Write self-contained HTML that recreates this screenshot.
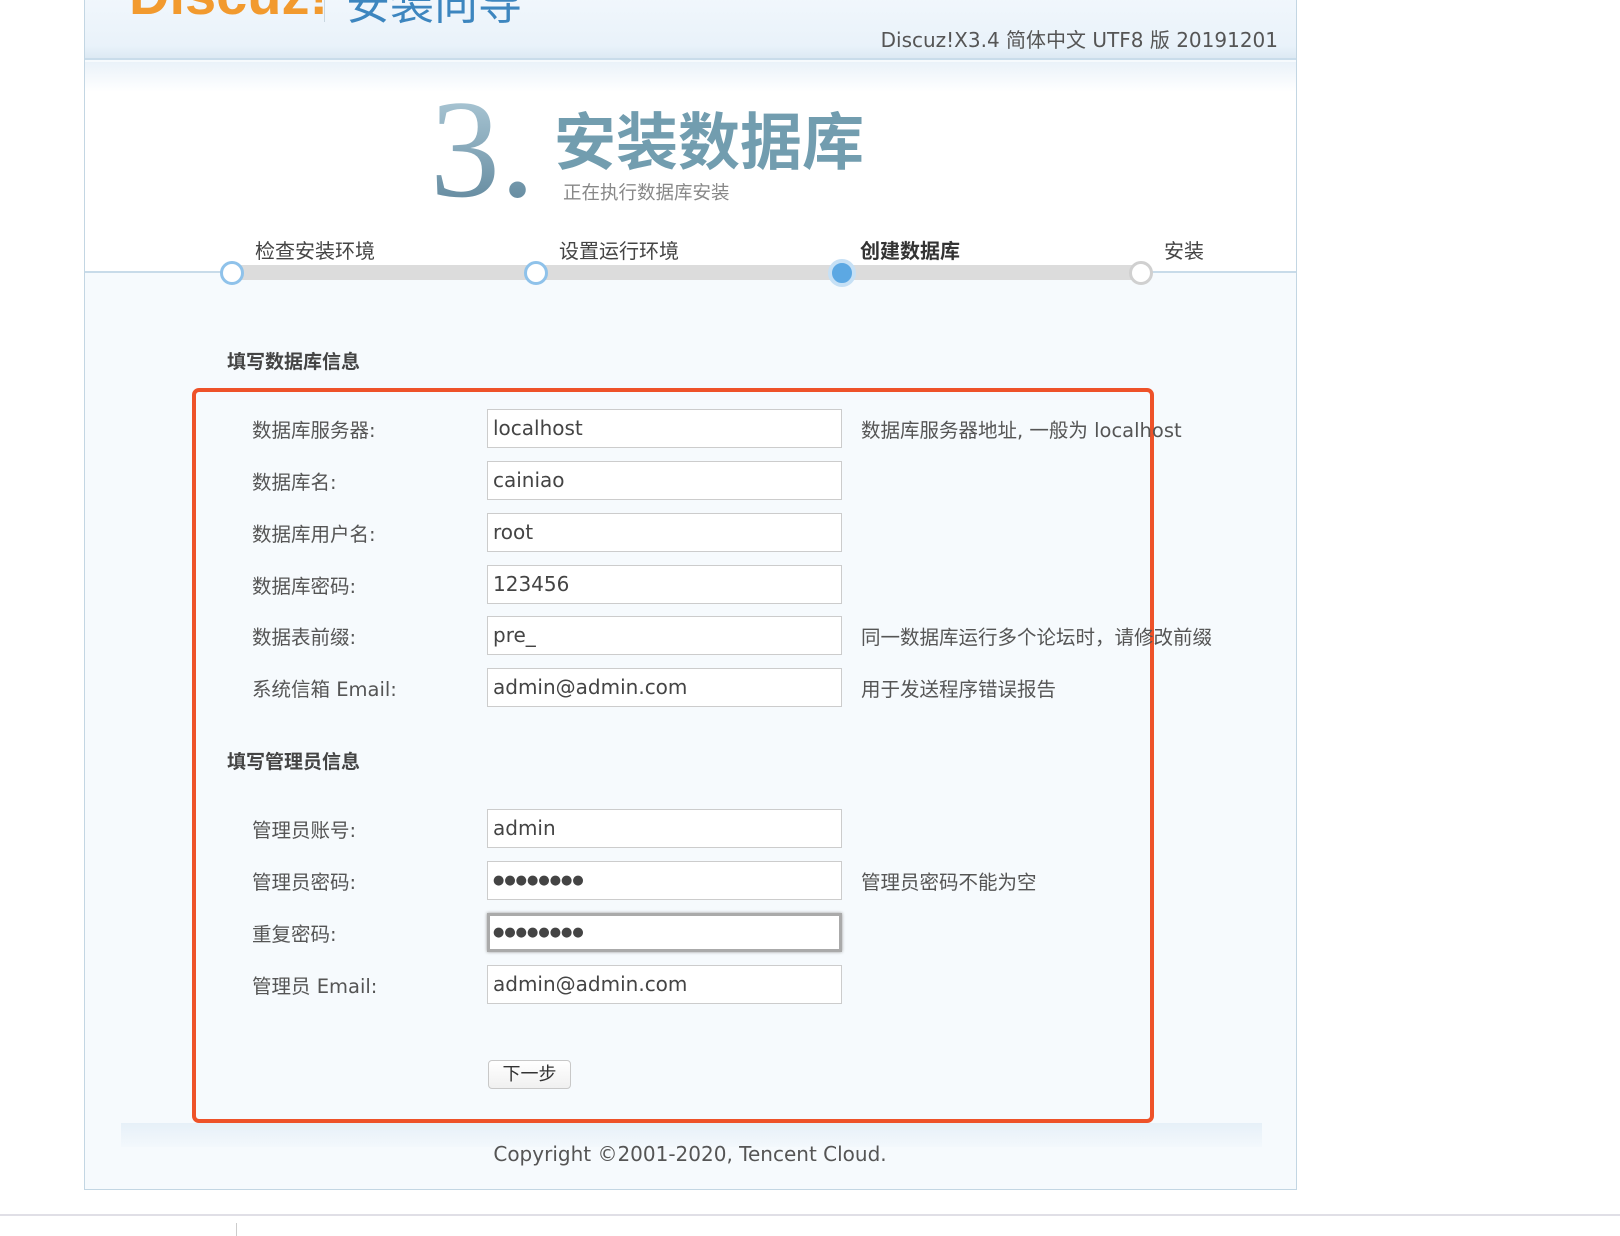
<!DOCTYPE html>
<html><head><meta charset="utf-8"><style>
*{margin:0;padding:0;box-sizing:border-box}
body{width:1620px;height:1236px;background:#fff;font-family:"DejaVu Sans","Noto Sans CJK SC",sans-serif;position:relative;overflow:hidden;color:#555}
.abs{position:absolute;white-space:nowrap}
#frame{position:absolute;left:84px;top:-2px;width:1213px;height:1192px;border:1px solid #c3d6e3;border-top:none;background:#f6fafd;overflow:hidden}
#hdr{position:absolute;left:0;top:0;width:100%;height:62px;background:linear-gradient(#f1f7fc,#e9f2fa 80%,#dde9f3);border-bottom:2px solid #c9dcea}
#white{position:absolute;left:0;top:64px;width:100%;height:210px;background:linear-gradient(#eaf2f9,#fff 30px)}
.lab{position:absolute;left:252px;font-size:19.5px;color:#555}
.inp{position:absolute;left:487px;width:355px;height:39px;background:#fff;border:1px solid #ccc;font-size:20px;color:#444;padding-left:5px;line-height:37px}
.hint{position:absolute;left:861px;font-size:19.5px;color:#555}
.circ{position:absolute;width:24px;height:24px;border-radius:50%;background:#fff;border:3px solid #8fc2ea;top:261px}
.step{position:absolute;top:235px;font-size:20px;color:#444}
.pw{letter-spacing:0px;font-size:13px}
</style></head><body>
<div id="frame">
 <div id="hdr"></div>
 <div id="white"></div>
 <div style="position:absolute;left:0;top:273px;width:100%;height:2px;background:#c8dbe9"></div>
 <div style="position:absolute;left:36px;top:1125px;width:1141px;height:24px;background:linear-gradient(#e6f0f8,#f3f8fc)"></div>
</div>
<div class="abs" style="left:129px;top:-38px;font-family:'Liberation Sans',sans-serif;font-size:56px;font-weight:bold;color:#f29a2e">Discuz!</div>
<div class="abs" style="left:324px;top:0;width:1px;height:22px;background:#c8d6e0"></div>
<div class="abs" style="left:346px;top:-32px;font-size:44px;color:#3d86bf;font-family:'Noto Sans CJK SC',sans-serif">安装向导</div>
<div class="abs" style="right:342px;top:24px;font-size:20px;color:#555">Discuz!X3.4 简体中文 UTF8 版 20191201</div>

<div class="abs" style="left:430px;top:80px;font-family:'Liberation Serif',serif;font-size:140px;line-height:140px;background:linear-gradient(#b4cfdc,#5a8298);-webkit-background-clip:text;color:transparent">3.</div>
<div class="abs" style="left:554px;top:100px;font-size:62px;font-weight:bold;color:#729daf;line-height:74px;font-family:'Noto Sans CJK SC',sans-serif">安装数据库</div>
<div class="abs" style="left:563px;top:179px;font-size:18.5px;color:#888">正在执行数据库安装</div>

<div class="abs" style="left:232px;top:265px;width:909px;height:15px;background:#dcdcdc"></div>
<div class="circ" style="left:220px"></div>
<div class="circ" style="left:524px"></div>
<div class="circ" style="left:828px;width:28px;height:28px;top:259px;border:4px solid #c6e0f5;background:#5ca8e3"></div>
<div class="circ" style="left:1129px;border-color:#d0d0d0"></div>
<div class="step" style="left:255px">检查安装环境</div>
<div class="step" style="left:559px">设置运行环境</div>
<div class="step" style="left:860px;font-weight:bold;color:#333">创建数据库</div>
<div class="step" style="left:1164px">安装</div>

<div class="abs" style="left:227px;top:347px;font-size:19px;font-weight:bold;color:#444">填写数据库信息</div>
<div class="abs" style="left:192px;top:388px;width:962px;height:735px;border:4px solid #ee5229;border-radius:7px"></div>

<div class="lab" style="top:414px">数据库服务器:</div><div class="inp" style="top:409px">localhost</div><div class="hint" style="top:414px">数据库服务器地址, 一般为 localhost</div>
<div class="lab" style="top:466px">数据库名:</div><div class="inp" style="top:461px">cainiao</div>
<div class="lab" style="top:518px">数据库用户名:</div><div class="inp" style="top:513px">root</div>
<div class="lab" style="top:570px">数据库密码:</div><div class="inp" style="top:565px">123456</div>
<div class="lab" style="top:621px">数据表前缀:</div><div class="inp" style="top:616px">pre_</div><div class="hint" style="top:621px">同一数据库运行多个论坛时，请修改前缀</div>
<div class="lab" style="top:673px">系统信箱 Email:</div><div class="inp" style="top:668px">admin@admin.com</div><div class="hint" style="top:673px">用于发送程序错误报告</div>

<div class="abs" style="left:227px;top:747px;font-size:19px;font-weight:bold;color:#444">填写管理员信息</div>
<div class="lab" style="top:814px">管理员账号:</div><div class="inp" style="top:809px">admin</div>
<div class="lab" style="top:866px">管理员密码:</div><div class="inp pw" style="top:861px">●●●●●●●●</div><div class="hint" style="top:866px">管理员密码不能为空</div>
<div class="lab" style="top:918px">重复密码:</div><div class="inp pw" style="top:913px;border:3px solid #aaa;box-shadow:0 0 3px #999;line-height:33px;padding-left:3px">●●●●●●●●</div>
<div class="lab" style="top:970px">管理员 Email:</div><div class="inp" style="top:965px">admin@admin.com</div>

<div class="abs" style="left:488px;top:1060px;width:83px;height:29px;background:linear-gradient(#fff,#f0f0f0);border:1px solid #c8c8c8;border-radius:4px;font-size:18px;color:#333;text-align:center;line-height:27px">下一步</div>

<div class="abs" style="left:0;width:1380px;top:1142px;text-align:center;font-size:20px;color:#555">Copyright ©2001-2020, Tencent Cloud.</div>

<div class="abs" style="left:0;top:1214px;width:1620px;height:2px;background:#e0dfe6"></div>
<div class="abs" style="left:236px;top:1223px;width:1px;height:13px;background:#ccc"></div>
</body></html>
